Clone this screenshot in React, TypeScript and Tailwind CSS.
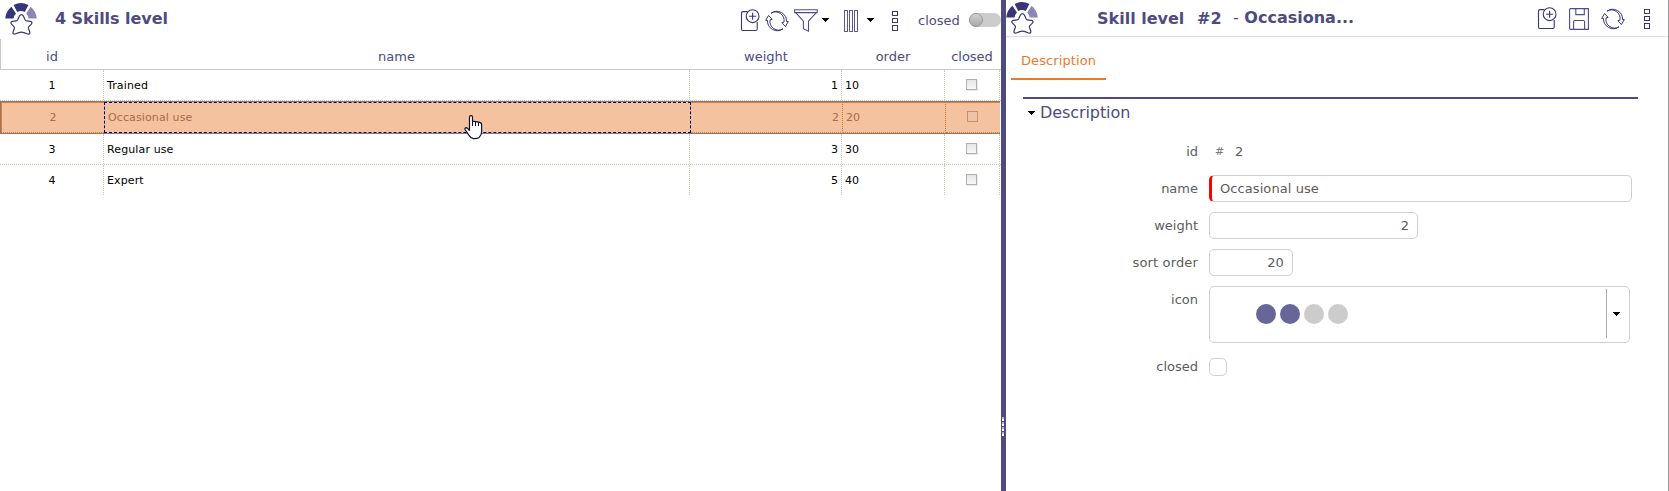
import React from "react";

const rows = [
  { id: 1, name: "Trained", weight: 1, order: 10 },
  { id: 2, name: "Occasional use", weight: 2, order: 20 },
  { id: 3, name: "Regular use", weight: 3, order: 30 },
  { id: 4, name: "Expert", weight: 5, order: 40 },
];

const starPath =
  "M14.3 13.2 Q16.4 10 18.5 13.2 L20.2 17 Q20.6 17.8 21.6 17.9 L25.4 18.3 Q28 19 26.3 21.2 L23.9 23.6 Q23.2 24.3 23.4 25.2 L24.8 29 Q25.2 31.6 22.6 31 L19 29.6 Q16.4 28.8 13.8 29.6 L10.2 31 Q7.6 31.6 8 29 L9.4 25.2 Q9.6 24.3 8.9 23.6 L6.5 21.2 Q4.8 19 7.4 18.3 L11.2 17.9 Q12.2 17.8 12.6 17 Z";

function SkillLogo() {
  return (
    <svg width="32" height="33" viewBox="0 0 32 33" className="block shrink-0">
      <path d="M8.6 2.1 Q15.9 -1.9 23.4 2.1 L19.8 9 Q16 7 12.2 9 Z" fill="#363678" />
      <path d="M6.4 3.8 L11 10.4 Q8.8 12.4 8.6 15.6 L0.2 15.6 Q0.8 8.4 6.4 3.8 Z" fill="#363678" />
      <path d="M25.6 3.8 L21.2 10.4 Q23.2 12.4 23.6 15.6 L31.8 15.6 Q31.2 8.4 25.6 3.8 Z" fill="#8a87b4" />
      <path d={starPath} fill="#fff" stroke="#363678" strokeWidth="1.2" strokeLinejoin="round" />
    </svg>
  );
}

function AddIcon() {
  return (
    <svg width="20" height="23" viewBox="0 0 20 23" className="block shrink-0" fill="none" stroke="#363678" strokeWidth="1.1">
      <path d="M7.5 2.6 H3 Q1.5 2.6 1.5 4 V20 Q1.5 21.5 3 21.5 H15.7 Q17.2 21.5 17.2 20 V13" />
      <circle cx="12.6" cy="7.2" r="6.4" />
      <path d="M12.6 3.7 V10.7 M9.1 7.2 H16.1" />
    </svg>
  );
}

function RefreshIcon() {
  return (
    <svg width="24" height="22" viewBox="0 0 24 22" className="block shrink-0" fill="none" stroke="#363678" strokeWidth="1" strokeLinejoin="round">
      <path d="M6 3.2 A9.8 9.8 0 0 1 21.5 11.6 L23.3 11.6 L20.4 16.6 L16.9 12.6 L18.9 12.2 A8.6 8.6 0 0 0 6 3.2 Z" />
      <path d="M18 18.8 A9.8 9.8 0 0 1 2.5 10.4 L0.7 10.4 L3.6 5.4 L7.1 9.4 L5.1 9.8 A8.6 8.6 0 0 0 18 18.8 Z" />
    </svg>
  );
}

function FilterIcon() {
  return (
    <svg width="24" height="23" viewBox="0 0 24 23" className="block shrink-0" fill="none" stroke="#4c4c90" strokeWidth="1.1">
      <path d="M0.7 0.8 H23.2 V3.6 H0.7 Z" />
      <path d="M1.7 3.6 L9.4 12.2 V19.7 L14.5 22.2 V12.2 L22.2 3.6" />
    </svg>
  );
}

function ColumnsIcon() {
  return (
    <svg width="15" height="22" viewBox="0 0 15 22" className="block shrink-0" fill="none" stroke="#5a5a98">
      <rect x="0.5" y="0.5" width="3" height="21" />
      <rect x="5.5" y="0.5" width="3" height="21" />
      <rect x="10.5" y="0.5" width="3" height="21" />
    </svg>
  );
}

function SaveIcon() {
  return (
    <svg width="20" height="22" viewBox="0 0 20 22" className="block shrink-0" fill="none" stroke="#4c4c90" strokeWidth="1.1">
      <path d="M1.6 0.6 H19.4 V21.4 H2 Q0.6 21.4 0.6 20 V1.6 Q0.6 0.6 1.6 0.6 Z" />
      <path d="M6.8 0.8 V6.6 H15.3 V0.8 M4.6 21.2 V13.7 Q4.6 12.5 5.8 12.5 H14.4 Q15.6 12.5 15.6 13.7 V21.2" />
    </svg>
  );
}

function DotsIcon() {
  return (
    <svg width="6" height="20" viewBox="0 0 6 20" className="block shrink-0" fill="none" stroke="#363678">
      <rect x="0.5" y="0.5" width="5" height="4" />
      <rect x="0.5" y="7.5" width="5" height="4" />
      <rect x="0.5" y="14.5" width="5" height="5" />
    </svg>
  );
}

function Caret() {
  return (
    <svg width="7" height="4" viewBox="0 0 7 4" className="block shrink-0" shapeRendering="crispEdges">
      <path d="M0 0 H7 V1 H6 V2 H5 V3 H4 V4 H3 V3 H2 V2 H1 V1 H0 Z" fill="#000" />
    </svg>
  );
}

function HandCursor() {
  return (
    <svg width="19" height="25" viewBox="0 0 19 25" className="absolute left-[464px] top-[115px]">
      <path
        d="M5.5 15.8 V2.2 Q5.5 0.7 7 0.7 Q8.5 0.7 8.5 2.2 V6.2 L15 7.2 Q17.6 7.6 17.6 9.8 V17 Q17.4 20.6 14.8 22.8 Q12.6 23.8 9.4 23.6 Q6.6 23 5.2 20.6 L1 14.6 Q0.5 12.8 2.3 12.7 Q3.4 12.8 5.5 15.6 Z"
        fill="#fff"
        stroke="#101028"
        strokeWidth="1.2"
      />
      <path d="M8.5 6 V11 M11.5 6.6 V11 M14.5 7.1 V11" stroke="#101028" strokeWidth="1" />
    </svg>
  );
}

function GridCheck() {
  return <span className="block h-[11px] w-[11px] border border-[#b0b0b0] bg-linear-to-b from-[#e6e6e6] to-[#f8f8f8] shadow-[1px_1px_0_#e8e8e8]" />;
}

function DataRow({ row, h, line }: { row: (typeof rows)[number]; h: string; line: boolean }) {
  const cell = "border-r border-dotted border-[#cfc9b2] flex items-center";
  return (
    <div className={`flex ${h} text-[11px] text-black ${line ? "border-b border-dotted border-[#cfc9b2]" : ""}`}>
      <div className={`${cell} w-[104px] justify-center pl-px pt-[3px]`}>{row.id}</div>
      <div className={`${cell} w-[586px] pl-[3px] pt-[3px] tracking-[0.12px]`}>{row.name}</div>
      <div className={`${cell} w-[152px] justify-end pr-[3px] pt-[3px]`}>{row.weight}</div>
      <div className={`${cell} w-[103px] pl-[3px] pt-[3px]`}>{row.order}</div>
      <div className={`${cell} w-[55px] justify-center pb-[1px] pr-px`}>
        <GridCheck />
      </div>
    </div>
  );
}

function SelectedRow({ row }: { row: (typeof rows)[number] }) {
  const cell = "border-t border-b border-t-[#e87a2b] border-b-[#e87a2b] [border-bottom-style:dotted] flex shrink-0 items-center";
  return (
    <div className="flex h-[33px] w-[1000px] border-y border-l border-[#857b72] bg-[#f5c29f] text-[11px] text-[#a56c48]">
      <div className={`${cell} w-[103px] justify-center border-l border-l-[#e87a2b] pt-[2px]`}>{row.id}</div>
      <div className="flex w-[587px] shrink-0 items-center border border-dashed border-[#00007c] bg-[#f5c29f] pl-[3px] pt-[2px] tracking-[0.12px]">{row.name}</div>
      <div className={`${cell} w-[152px] justify-end border-r border-r-[#c9742f] pr-[3px] pt-[2px] [border-right-style:dotted]`}>{row.weight}</div>
      <div className={`${cell} w-[103px] border-r border-r-[#c9742f] pl-[3px] pt-[2px] [border-right-style:dotted]`}>{row.order}</div>
      <div className={`${cell} w-[54px] justify-center pb-[2px] pr-px`}>
        <span className="block h-[11px] w-[11px] border border-[#c2916f] bg-[#eec4a6]" />
      </div>
    </div>
  );
}

function Field({ label, className, children }: { label: string; className: string; children: React.ReactNode }) {
  return (
    <div className={`flex ${className}`}>
      <div className="w-[192px] text-right leading-[27px]">{label}</div>
      <div className="pl-[11px]">{children}</div>
    </div>
  );
}

function Splitter() {
  return (
    <div className="flex w-[5px] shrink-0 flex-col gap-[1px] bg-[#4e4b80] pl-px pt-[417px]">
      {[0, 1, 2, 3].map((n) => (
        <div key={n} className="h-1 w-[2px] border-t-2 border-[#b8b8b8] bg-white" />
      ))}
    </div>
  );
}

export default function App() {
  return (
    <div className="flex h-[491px] w-[1669px] overflow-hidden bg-white font-['Verdana','DejaVu_Sans',sans-serif]">
      <section className="relative flex w-[1001px] shrink-0 flex-col">
        <header className="flex h-[39px] text-[#4e4b80]">
          <div className="pl-[5px] pt-[3px]">
            <SkillLogo />
          </div>
          <h1 className="w-[683px] pl-[18px] pt-[7px] text-base font-bold tracking-[-0.04px]">4 Skills level</h1>
          <div className="flex grow">
            <div className="mt-[9px] pl-[20px]"><AddIcon /></div>
            <div className="ml-[5px] mt-[10px]"><RefreshIcon /></div>
            <div className="ml-[5px] mt-[9px]"><FilterIcon /></div>
            <div className="ml-[4px] mt-[18px]"><Caret /></div>
            <div className="ml-[15px] mt-[10px]"><ColumnsIcon /></div>
            <div className="ml-[8px] mt-[18px]"><Caret /></div>
            <div className="ml-[18px] mt-[11px]"><DotsIcon /></div>
            <span className="ml-[20px] mt-[11px] w-[51px] text-[13px] leading-5">closed</span>
            <div className="mt-[13px] h-[14px] w-8 shrink-0 rounded-full bg-[#cccccc]">
              <div className="h-[14px] w-[14px] rounded-full border border-[#999] bg-linear-to-b from-[#d2d2d2] to-[#a8a8a8]" />
            </div>
          </div>
        </header>
        <div className="flex h-[31px] w-[1001px] border-b border-l border-[#c8c8c8] text-[13px] leading-[35px] text-[#4e4b80]">
          <div className="w-[102px] text-center">id</div>
          <div className="w-[586px] pl-px text-center">name</div>
          <div className="w-[152px] pl-[2px] text-center">weight</div>
          <div className="w-[103px] pl-px text-center">order</div>
          <div className="w-[55px] pl-px text-center">closed</div>
        </div>
        <DataRow row={rows[0]} h="h-[31px]" line />
        <SelectedRow row={rows[1]} />
        <DataRow row={rows[2]} h="h-[31px]" line />
        <DataRow row={rows[3]} h="h-[30px]" line={false} />
        <HandCursor />
      </section>

      <Splitter />

      <section className="flex w-[663px] shrink-0 flex-col border-r border-[#999]">
        <header className="flex h-[37px] border-b border-[#dcdce8] text-base font-bold text-[#4e4b80]">
          <div className="pt-[2px]"><SkillLogo /></div>
          <span className="ml-[59px] mt-[7px] w-[100px] whitespace-nowrap">Skill level</span>
          <span className="mt-[7px] w-[36px]">#2</span>
          <span className="mt-[6px] w-[304px] whitespace-nowrap"><span className="font-normal">-</span> Occasiona...</span>
          <div className="mt-[7px]"><AddIcon /></div>
          <div className="ml-[12px] mt-[8px]"><SaveIcon /></div>
          <div className="ml-[12px] mt-[8px]"><RefreshIcon /></div>
          <div className="ml-[19px] mt-[9px]"><DotsIcon /></div>
        </header>
        <nav className="flex h-[43px] pl-[5px]">
          <div className="h-[43px] w-[95px] border-b-2 border-[#e87a2b] text-center text-[13px] leading-[47px] tracking-[0.1px] text-[#e87a2b]">Description</div>
        </nav>
        <div className="ml-[17px] mt-[17px] w-[615px] border-t-2 border-[#4e4b80]">
          <div className="flex h-[28px] items-center gap-[5px] pl-[5px] text-base text-[#4e4b80]">
            <Caret />
            <h2 className="tracking-[-0.08px]">Description</h2>
          </div>
        </div>
        <div className="flex flex-col text-[13px] text-[#5c5c5c]">
          <Field label="id" className="mt-[11px] h-[37px]">
            <span className="flex leading-[27px]"><span className="w-[20px] pl-[6px] text-[11px] text-[#777]">#</span><span className="pl-[6px]">2</span></span>
          </Field>
          <Field label="name" className="h-[37px]">
            <div className="h-[27px] w-[423px] rounded-[5px] border border-l-[3px] border-[#d0d0d0] border-l-[#f00] pl-2 leading-[25px] tracking-[0.08px]">Occasional use</div>
          </Field>
          <Field label="weight" className="h-[37px]">
            <div className="h-[27px] w-[209px] rounded-[5px] border border-[#d0d0d0] pr-2 text-right leading-[25px]">2</div>
          </Field>
          <Field label="sort order" className="h-[37px] tracking-[0.15px]">
            <div className="h-[27px] w-[84px] rounded-[5px] border border-[#d0d0d0] pr-2 text-right leading-[25px]">20</div>
          </Field>
          <Field label="icon" className="h-[72px]">
            <div className="flex h-[57px] w-[421px] items-center rounded-[5px] border border-[#d0d0d0]">
              <div className="flex w-[396px] gap-1 pb-px pl-[46px]">
                <i className="h-5 w-5 rounded-full bg-[#666699]" />
                <i className="h-5 w-5 rounded-full bg-[#666699]" />
                <i className="h-5 w-5 rounded-full bg-[#cccccc]" />
                <i className="h-5 w-5 rounded-full bg-[#cccccc]" />
              </div>
              <div className="mb-[2px] flex h-[49px] items-center border-l border-[#aaa] pl-[6px]">
                <Caret />
              </div>
            </div>
          </Field>
          <Field label="closed" className="-mt-[5px]">
            <div className="mt-[5px] h-[18px] w-[18px] rounded-[5px] border border-[#d0d0d0]" />
          </Field>
        </div>
      </section>
    </div>
  );
}
